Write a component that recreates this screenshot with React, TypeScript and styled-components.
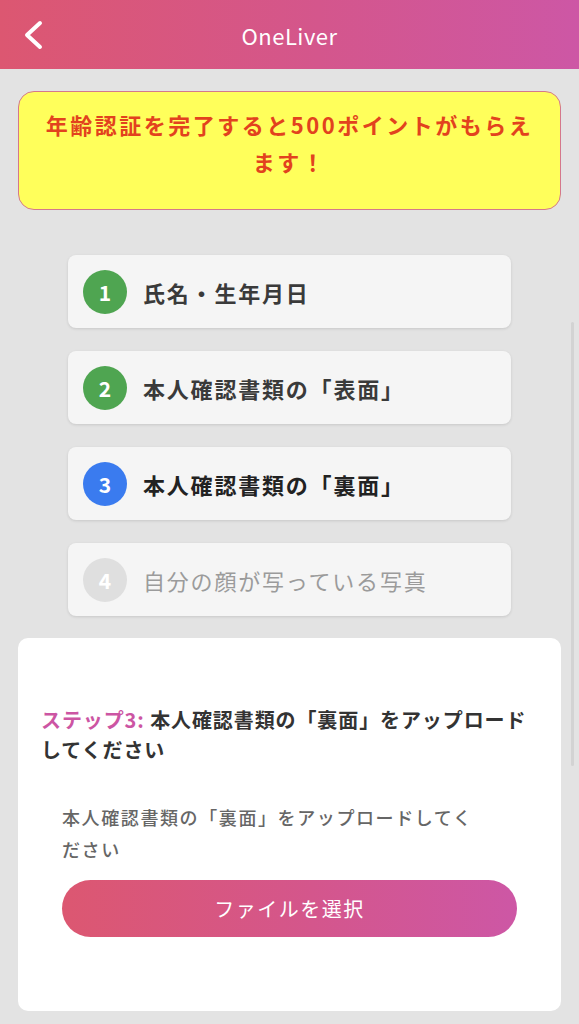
import styled, { createGlobalStyle } from 'styled-components';

type StepState = 'done' | 'current' | 'todo';

const steps: { no: number; label: string; state: StepState }[] = [
  { no: 1, label: '氏名・生年月日', state: 'done' },
  { no: 2, label: '本人確認書類の「表面」', state: 'done' },
  { no: 3, label: '本人確認書類の「裏面」', state: 'current' },
  { no: 4, label: '自分の顔が写っている写真', state: 'todo' },
];

const circleColors: Record<StepState, string> = {
  done: '#4fa551',
  current: '#3a7bef',
  todo: '#dfdfdf',
};

const labelColors: Record<StepState, string> = {
  done: '#3a3a3a',
  current: '#222',
  todo: '#9b9b9b',
};

function App() {
  return (
    <Page>
      <GlobalStyle />
      <Header>
        <BackButton aria-label="戻る">
          <svg width="22" height="30" viewBox="0 0 22 30" fill="none">
            <path
              d="M18 3 L5 15 L18 27"
              stroke="#fff"
              strokeWidth="4"
              strokeLinecap="round"
              strokeLinejoin="round"
            />
          </svg>
        </BackButton>
        <Title>OneLiver</Title>
        <span />
      </Header>

      <Content>
        <Banner>年齢認証を完了すると500ポイントがもらえます！</Banner>

        <StepList>
          {steps.map((s) => (
            <StepCard key={s.no}>
              <StepNumber $state={s.state}>{s.no}</StepNumber>
              <StepLabel $state={s.state}>{s.label}</StepLabel>
            </StepCard>
          ))}
        </StepList>

        <Panel>
          <PanelHeading>
            <StepTag>ステップ3: </StepTag>本人確認書類の「裏面」をアップロードしてください
          </PanelHeading>
          <UploadArea>
            <Description>本人確認書類の「裏面」をアップロードしてください</Description>
            <SelectButton type="button">ファイルを選択</SelectButton>
          </UploadArea>
        </Panel>
      </Content>

      <ScrollThumb />
    </Page>
  );
}

const GlobalStyle = createGlobalStyle`
  body {
    margin: 0;
    background: #e3e3e3;
    font-family: "Noto Sans CJK JP", "Noto Sans", sans-serif;
  }
`;

const Page = styled.div`
  position: relative;
  min-height: 1024px;
  overflow: hidden;
`;

const Header = styled.header`
  display: grid;
  grid-template-columns: 60px 1fr 60px;
  align-items: center;
  height: 69px;
  background: linear-gradient(90deg, #dc5771 0%, #d4568c 55%, #cd57a5 100%);
`;

const BackButton = styled.button`
  display: flex;
  align-items: center;
  justify-content: center;
  padding: 0 0 0 6px;
  height: 69px;
  border: none;
  background: none;
`;

const Title = styled.h1`
  margin: 0;
  text-align: center;
  color: #fff;
  font-size: 22px;
  font-weight: 400;
  letter-spacing: 0.5px;
`;

const Content = styled.main`
  padding: 22px 18px 13px;
`;

const Banner = styled.div`
  box-sizing: border-box;
  height: 119px;
  padding: 14px 20px 0;
  border: 1px solid #d4788c;
  border-radius: 16px;
  background: #ffff5b;
  color: #e2421e;
  font-size: 22px;
  font-weight: 700;
  line-height: 37px;
  letter-spacing: 2.5px;
  text-align: center;
`;

const StepList = styled.ol`
  display: flex;
  flex-direction: column;
  gap: 23px;
  margin: 45px 0 0;
  padding: 0 50px;
  list-style: none;
`;

const StepCard = styled.li`
  display: flex;
  align-items: center;
  gap: 16px;
  height: 73px;
  padding: 0 15px;
  border-radius: 8px;
  background: #f5f5f5;
  box-shadow: 0 1px 3px rgba(0, 0, 0, 0.12);
`;

const StepNumber = styled.span<{ $state: StepState }>`
  display: flex;
  align-items: center;
  justify-content: center;
  flex: none;
  width: 44px;
  height: 44px;
  border-radius: 50%;
  background: ${(p) => circleColors[p.$state]};
  color: #fff;
  font-size: 21px;
  font-weight: 700;
`;

const StepLabel = styled.span<{ $state: StepState }>`
  color: ${(p) => labelColors[p.$state]};
  font-size: 22px;
  font-weight: ${(p) => (p.$state === 'todo' ? 400 : 700)};
  letter-spacing: 1.8px;
`;

const Panel = styled.section`
  margin-top: 22px;
  padding: 67px 20px 74px 23px;
  border-radius: 10px;
  background: #fff;
`;

const PanelHeading = styled.h2`
  margin: 0;
  color: #333;
  font-size: 20px;
  font-weight: 700;
  line-height: 30px;
  letter-spacing: 0.9px;
`;

const StepTag = styled.span`
  color: #cc55a3;
`;

const UploadArea = styled.div`
  display: flex;
  flex-direction: column;
  gap: 15px;
  margin-top: 36px;
  padding: 0 24px 0 21px;
`;

const Description = styled.p`
  margin: 0;
  max-width: 420px;
  color: #666;
  font-size: 18px;
  font-weight: 500;
  line-height: 32px;
  letter-spacing: 1.6px;
`;

const SelectButton = styled.button`
  height: 57px;
  border: none;
  border-radius: 29px;
  background: linear-gradient(90deg, #dc5771 0%, #d4568c 55%, #cd57a5 100%);
  color: #fff;
  font-family: inherit;
  font-size: 20px;
  font-weight: 400;
  letter-spacing: 1.5px;
`;

const ScrollThumb = styled.div`
  position: absolute;
  top: 322px;
  right: 5px;
  width: 3px;
  height: 444px;
  border-radius: 2px;
  background: #d3d3d3;
`;

export default App;
